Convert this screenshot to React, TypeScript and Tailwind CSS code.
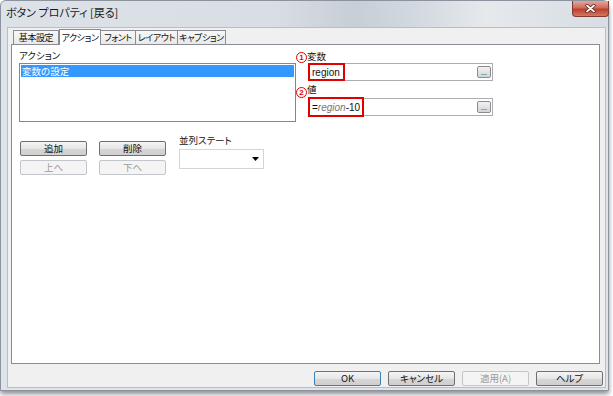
import React from 'react';

const tabs = [
    { label: '基本設定', w: 'w-[46px]' },
    { label: 'アクション', w: 'w-[42px]', active: true },
    { label: 'フォント', w: 'w-[36px]' },
    { label: 'レイアウト', w: 'w-[43px]' },
    { label: 'キャプション', w: 'w-[49px]' },
];

const Btn = ({ children, disabled, def }: { children: React.ReactNode; disabled?: boolean; def?: boolean }) => (
    <div
        className={`w-[67px] h-[15px] flex items-center justify-center rounded-[2px] border text-[9.5px] leading-none whitespace-nowrap ${
            disabled
                ? 'border-[#c2c6ca] bg-[#f4f4f4] text-[#9a9a9a]'
                : def
                ? 'border-[#3c7fb1] bg-[linear-gradient(#f4f4f4,#e6e6e6_50%,#d6d6d6_51%,#cfcfcf)] text-[#111]'
                : 'border-[#707070] bg-[linear-gradient(#f4f4f4,#e6e6e6_50%,#d6d6d6_51%,#cfcfcf)] text-[#111]'
        }`}
    >
        {children}
    </div>
);

const DotsBtn = () => (
    <div className="w-[14px] h-[12px] mr-[1px] rounded-[2px] border border-[#8c8c8c] bg-[linear-gradient(#f2f2f2,#d4d4d4)] flex items-end justify-center pb-[1px]">
        <span className="text-[7px] leading-none text-[#333]">...</span>
    </div>
);

const Circled = ({ n }: { n: string }) => (
    <span className="w-[11px] h-[11px] rounded-full border-[1.5px] border-[#e00000] text-[#e00000] text-[8px] leading-none font-bold flex items-center justify-center font-['Liberation_Sans',sans-serif]">
        {n}
    </span>
);

export default function App() {
    return (
        <div className="w-[613px] h-[396px] bg-white overflow-hidden font-['Noto_Sans_CJK_JP',sans-serif] [font-feature-settings:'palt'] text-[#111]">
            <div className="w-[609px] h-[391px] flex flex-col border border-[#8b949e] rounded-t-[6px] bg-[#dfe4ea] shadow-[0_3px_5px_rgba(0,0,0,0.45)]">
                {/* title bar */}
                <div className="h-[26px] flex items-start justify-between bg-[linear-gradient(90deg,#dde2e8_0%,#d9dee4_45%,#c8ced6_58%,#d2d8df_68%,#e6e9ec_80%,#d7dde4_100%)] rounded-t-[6px]">
                    <span className="pl-[5px] pt-[4px] text-[11px] leading-[14px] text-[#1a1a1a] whitespace-nowrap">ボタン プロパティ [戻る]</span>
                    <div className="w-[37px] h-[16px] mr-[-1px] rounded-b-[4px] border border-t-0 border-[#7d3b31] bg-[linear-gradient(#e3a79c,#cf6d5b_45%,#bb3f2c_55%,#d67563)] flex items-center justify-center">
                        <svg width="11" height="9" viewBox="0 0 11 9">
                            <path d="M2 1.5 L9 7.5 M9 1.5 L2 7.5" stroke="#4a1a14" strokeWidth="3.2" strokeLinecap="round" />
                            <path d="M2 1.5 L9 7.5 M9 1.5 L2 7.5" stroke="#ffffff" strokeWidth="1.8" strokeLinecap="round" />
                        </svg>
                    </div>
                </div>
                {/* client */}
                <div className="ml-[6px] w-[599px] h-[361px] border border-[#b7bec7] bg-[#f0f0f0] flex flex-col">
                    {/* tabs */}
                    <div className="h-[16px] flex items-end pl-[5px]">
                        {tabs.map((t) =>
                            t.active ? (
                                <div
                                    key={t.label}
                                    className={`${t.w} h-[16px] -mb-px z-10 bg-white border border-b-0 border-[#898c95] flex items-center justify-center text-[9px] tracking-[-0.4px] leading-none whitespace-nowrap overflow-visible`}
                                >
                                    {t.label}
                                </div>
                            ) : (
                                <div
                                    key={t.label}
                                    className={`${t.w} h-[14px] -ml-px first:ml-0 bg-[linear-gradient(#f7f7f7,#e9e9e9)] border border-b-0 border-[#898c95] flex items-center justify-center text-[9px] tracking-[-0.4px] leading-none whitespace-nowrap overflow-visible`}
                                >
                                    {t.label}
                                </div>
                            )
                        )}
                    </div>
                    {/* panel */}
                    <div className="ml-[3px] w-[589px] h-[320px] bg-white border border-[#898c95] flex flex-col pl-[7px] pt-[3px]">
                        <div className="flex items-start">
                            <div className="flex flex-col">
                                <span className="h-[15px] text-[9.5px] leading-[13px] pt-[1px]">アクション</span>
                                <div className="w-[277px] h-[59px] border border-[#828790] bg-white p-[1px]">
                                    <div className="h-[12px] bg-[#3399ff] text-white text-[9.5px] leading-[12px] pl-[1px]">変数の設定</div>
                                </div>
                            </div>
                            <div className="flex flex-col">
                                <div className="h-[15px] flex items-end">
                                    <Circled n="1" />
                                    <span className="text-[9.5px] leading-none pb-[2px]">変数</span>
                                </div>
                                <div className="ml-[12px] w-[185px] h-[18px] border border-[#abadb3] bg-white flex items-center justify-between">
                                    <span className="h-[18px] -ml-px -mt-px -mb-px px-[2px] w-[37px] border-2 border-[#e00000] flex items-center text-[10px] font-['Liberation_Sans',sans-serif]">
                                        region
                                    </span>
                                    <DotsBtn />
                                </div>
                                <div className="h-[17px] flex items-end">
                                    <Circled n="2" />
                                    <span className="text-[9.5px] leading-none pb-[4px]">値</span>
                                </div>
                                <div className="ml-[12px] w-[185px] h-[18px] border border-[#abadb3] bg-white flex items-center justify-between">
                                    <span className="h-[20px] -ml-px -my-[2px] px-[2px] w-[56px] border-2 border-[#e00000] flex items-center text-[10px] font-['Liberation_Sans',sans-serif]">
                                        =<i className="text-[#777]">region</i>-10
                                    </span>
                                    <DotsBtn />
                                </div>
                            </div>
                        </div>
                        <div className="flex items-start mt-[14px]">
                            <div className="flex flex-col gap-[4px] mt-[5px] ml-[1px]">
                                <Btn>追加</Btn>
                                <Btn disabled>上へ</Btn>
                            </div>
                            <div className="flex flex-col gap-[4px] mt-[5px] ml-[12px]">
                                <Btn>削除</Btn>
                                <Btn disabled>下へ</Btn>
                            </div>
                            <div className="flex flex-col ml-[13px]">
                                <span className="h-[13px] text-[9.5px] leading-none">並列ステート</span>
                                <div className="w-[85px] h-[20px] border border-[#d5d5d5] bg-white flex items-center justify-end pr-[4px]">
                                    <svg width="7" height="4" viewBox="0 0 7 4">
                                        <path d="M0 0 H7 L3.5 4 Z" fill="#000" />
                                    </svg>
                                </div>
                            </div>
                        </div>
                    </div>
                    {/* bottom buttons */}
                    <div className="mt-[7px] flex justify-end pr-[2px]">
                        <div className="flex gap-[7px]">
                            <Btn def>OK</Btn>
                            <Btn>キャンセル</Btn>
                            <Btn disabled>適用(A)</Btn>
                            <Btn>ヘルプ</Btn>
                        </div>
                    </div>
                </div>
            </div>
        </div>
    );
}
